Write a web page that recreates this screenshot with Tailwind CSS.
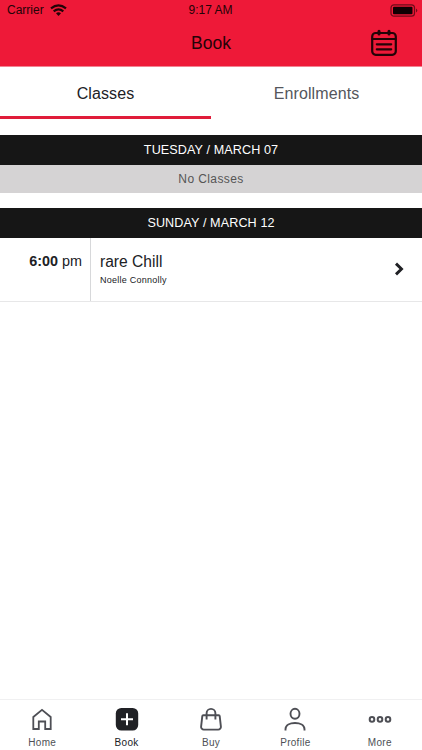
<!DOCTYPE html>
<html lang="en">
  <head>
    <meta charset="UTF-8" />
    <meta name="viewport" content="width=device-width, initial-scale=1.0" />
    <title>Book</title>
    <script src="https://cdn.jsdelivr.net/npm/@tailwindcss/browser@4"></script>
  </head>
  <body class="flex h-screen flex-col overflow-hidden bg-white font-['Liberation_Sans',Arial,sans-serif] text-[#202125]">
    <header class="h-[67px] shrink-0 border-b border-[#f28392] bg-[#ee1938] text-[#240307]">
      <div class="grid h-5 grid-cols-3 items-center pr-1 pl-[7px] text-xs leading-5">
        <div class="flex items-center gap-1.5">
          <span>Carrier</span>
          <svg class="h-3 w-[17px]" viewBox="0 0 17 12" fill="none" stroke="currentColor" stroke-width="2.2">
            <path d="M1 4.4Q8.5-1.8 16 4.4M3.7 7.3Q8.5 3.3 13.3 7.3" />
            <path d="M8.5 12 6 9.300Q8.5 7.3 11 9.3Z" fill="currentColor" stroke="none" />
          </svg>
        </div>
        <span class="pr-1 text-center">9:17 AM</span>
        <svg class="h-[13px] w-[28px] justify-self-end" viewBox="0 0 28 13" fill="none">
          <rect x="1" y="0.8" width="23.5" height="11.4" rx="3" stroke="#6d0b19" stroke-width="1.2" />
          <rect x="3" y="2.8" width="19.5" height="7.4" rx="1" fill="#100003" />
          <path d="M26 4.5Q28.6 6.5 26 8.5Z" fill="#6d0b19" />
        </svg>
      </div>
      <div class="grid h-[46px] grid-cols-3 items-center">
        <h1 class="col-start-2 text-center text-[17.5px]">Book</h1>
        <svg class="mr-6 h-7 w-7 justify-self-end" viewBox="0 0 28 28" fill="none" stroke="currentColor" stroke-width="2.2" stroke-linecap="round">
          <rect x="2.2" y="4" width="23.6" height="21.8" rx="3.5" />
          <path d="M2.5 10h23M6.8 15.3h14.4M6.8 20.3h14.4" />
          <path d="M9 2.2V5M19 2.2V5" stroke-width="3" />
        </svg>
      </div>
    </header>

    <nav class="grid h-[52px] shrink-0 grid-cols-2 text-center text-base leading-[53px] tracking-[0.1px]">
      <a class="h-[52px] border-b-[3px] border-[#e01c3a]">Classes</a>
      <a class="text-[#54565c]">Enrollments</a>
    </nav>

    <main class="flex-1 pt-4">
      <section>
        <h2 class="h-[30px] bg-[#161616] text-center text-[12.6px] leading-[30px] tracking-[0.1px] text-white">TUESDAY / MARCH 07</h2>
        <p class="h-7 bg-[#d5d3d4] text-center text-xs leading-7 tracking-[0.4px] text-[#555]">No Classes</p>
      </section>
      <section class="mt-[15px]">
        <h2 class="h-[30px] bg-[#161616] text-center text-[12.6px] leading-[30px] tracking-[0.1px] text-white">SUNDAY / MARCH 12</h2>
        <div class="flex h-16 border-b border-[#e7e7e8]">
          <div class="w-[91px] border-r border-[#d7d8da] pt-[13px] pr-2 text-right text-[14.4px] leading-5">
            <b>6:00</b> pm
          </div>
          <div class="flex-1 pt-3.5 pl-[9px]">
            <p class="text-[15.6px] leading-5">rare Chill</p>
            <p class="text-[9px] leading-4 tracking-[0.25px]">Noelle Connolly</p>
          </div>
          <svg class="mt-6 mr-[17px] h-[14px] w-3" viewBox="0 0 12 14" fill="none" stroke="currentColor" stroke-width="2.9">
            <path d="M3 1.6 8.5 7 3 12.4" />
          </svg>
        </div>
      </section>
    </main>

    <footer class="grid h-[51px] shrink-0 grid-cols-5 border-t border-[#f0f0f1] pt-[5px] text-center text-[10px] leading-4 tracking-[0.3px] text-[#4e4f55]">
      <a class="flex flex-col items-center gap-0.5">
        <svg class="h-7 w-7" viewBox="0 0 28 28" fill="none" stroke="currentColor" stroke-width="1.8">
          <path d="M5.3 12 14 4.8l8.7 7.2v12h-5.5v-7.5h-6.4V24H5.3Z" />
        </svg>
        <span>Home</span>
      </a>
      <a class="flex flex-col items-center gap-0.5 text-[#202125]">
        <svg class="h-7 w-7" viewBox="0 0 28 28" fill="none">
          <rect x="2.8" y="3" width="22.4" height="22.6" rx="5.5" fill="#202125" />
          <path d="M14 8.3v12M8 14.3h12" stroke="white" stroke-width="2" />
        </svg>
        <span>Book</span>
      </a>
      <a class="flex flex-col items-center gap-0.5">
        <svg class="h-7 w-7" viewBox="0 0 28 28" fill="none" stroke="currentColor" stroke-width="1.9">
          <path d="M6.3 10.3h15.4a1 1 0 0 1 1 .9l1.2 10.4a2.7 2.7 0 0 1-2.7 3H6.8a2.7 2.7 0 0 1-2.7-3l1.2-10.4a1 1 0 0 1 1-.9Z" />
          <path d="M9.6 14.5V8.3a4.4 4.4 0 0 1 8.8 0V14.5" />
        </svg>
        <span>Buy</span>
      </a>
      <a class="flex flex-col items-center gap-0.5">
        <svg class="h-7 w-7" viewBox="0 0 28 28" fill="none" stroke="currentColor" stroke-width="1.9">
          <ellipse cx="14" cy="8.8" rx="4.5" ry="5" />
          <path d="M4.5 25.5v-1.2C4.5 20.1 9 18 14 18s9.5 2.1 9.5 6.3V25.5" />
        </svg>
        <span>Profile</span>
      </a>
      <a class="flex flex-col items-center gap-0.5">
        <svg class="h-7 w-7" viewBox="0 0 28 28" fill="none" stroke="currentColor" stroke-width="2">
          <circle cx="6" cy="14.4" r="2.3" />
          <circle cx="14" cy="14.4" r="2.3" />
          <circle cx="22" cy="14.4" r="2.3" />
        </svg>
        <span>More</span>
      </a>
    </footer>
  </body>
</html>
